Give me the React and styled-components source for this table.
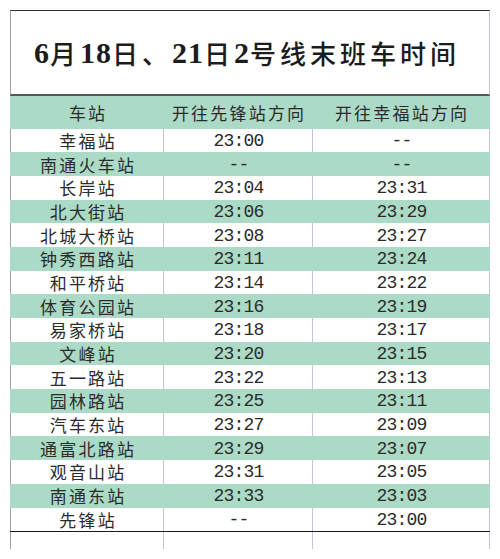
import React from "react";
import styled, { createGlobalStyle } from "styled-components";

const Global = createGlobalStyle`
  html, body { margin: 0; padding: 0; background: #ffffff; }
  body { font-family: "Liberation Serif", "Noto Sans CJK SC", serif; }
`;

const GREEN = "#abdac6";
const DIVIDER = "#cdbfd6";
const LEFTLINE = "#a2a2a2";

const Page = styled.div`
  width: 500px;
  height: 559px;
  box-sizing: border-box;
  padding: 10px 0 0 10px;
`;

const Sheet = styled.div`
  width: 480px;
  display: flex;
  flex-direction: column;
`;

const Title = styled.div`
  height: 83px;
  border-top: 1px solid #2e2e2e;
  border-left: 1px solid ${LEFTLINE};
  border-right: 1px solid ${DIVIDER};
  border-bottom: 2px solid #555a58;
  display: flex;
  align-items: center;
  justify-content: center;
  padding-right: 6px;
  font-family: "Noto Sans CJK SC", sans-serif;
  font-weight: 500;
  font-size: 26px;
  letter-spacing: 4px;
  color: #1c1c1c;
`;

const Num = styled.span`
  font-family: "Liberation Serif", serif;
  font-weight: 700;
  font-size: 30px;
  letter-spacing: 1px;
`;

const Row = styled.div`
  display: grid;
  grid-template-columns: 153px 149px 178px;
  height: ${(p) => p.$h}px;
  background: ${(p) => (p.$green ? GREEN : "#ffffff")};
  border-top: ${(p) => (p.$rule ? "1px solid #1a1a1a" : "none")};
  box-sizing: border-box;
`;

const Cell = styled.div`
  display: flex;
  align-items: center;
  justify-content: center;
  box-sizing: border-box;
  border-left: 1px solid
    ${(p) => (p.$green ? GREEN : p.$first ? LEFTLINE : DIVIDER)};
  border-right: ${(p) =>
    p.$last ? `1px solid ${p.$green ? GREEN : DIVIDER}` : "none"};
  color: #2b2b2b;
  white-space: nowrap;
`;

const Name = styled.span`
  font-family: "Noto Sans CJK SC", sans-serif;
  font-size: 17px;
  letter-spacing: 2.2px;
  margin-right: -2.2px;
  line-height: 1;
`;

const Time = styled.span`
  font-family: "Liberation Mono", monospace;
  font-size: 18px;
  letter-spacing: -0.8px;
  margin-right: -0.8px;
  line-height: 1;
  margin-top: 1px;
`;

const rows = [
  ["幸福站", "23:00", "--"],
  ["南通火车站", "--", "--"],
  ["长岸站", "23:04", "23:31"],
  ["北大街站", "23:06", "23:29"],
  ["北城大桥站", "23:08", "23:27"],
  ["钟秀西路站", "23:11", "23:24"],
  ["和平桥站", "23:14", "23:22"],
  ["体育公园站", "23:16", "23:19"],
  ["易家桥站", "23:18", "23:17"],
  ["文峰站", "23:20", "23:15"],
  ["五一路站", "23:22", "23:13"],
  ["园林路站", "23:25", "23:11"],
  ["汽车东站", "23:27", "23:09"],
  ["通富北路站", "23:29", "23:07"],
  ["观音山站", "23:31", "23:05"],
  ["南通东站", "23:33", "23:03"],
  ["先锋站", "--", "23:00"],
];

export default function App() {
  return (
    <Page>
      <Global />
      <Sheet>
        <Title>
          <Num>6</Num>月<Num>18</Num>日、<Num>21</Num>日<Num>2</Num>号线末班车时间
        </Title>
        <Row $green $h={32.5}>
          <Cell $green $first>
            <Name>车站</Name>
          </Cell>
          <Cell $green>
            <Name>开往先锋站方向</Name>
          </Cell>
          <Cell $green $last>
            <Name>开往幸福站方向</Name>
          </Cell>
        </Row>
        {rows.map((r, i) => {
          const g = i % 2 === 1;
          return (
            <Row key={r[0]} $green={g} $h={23.7}>
              <Cell $green={g} $first>
                <Name>{r[0]}</Name>
              </Cell>
              <Cell $green={g}>
                <Time>{r[1]}</Time>
              </Cell>
              <Cell $green={g} $last>
                <Time>{r[2]}</Time>
              </Cell>
            </Row>
          );
        })}
        <Row $rule $h={18}>
          <Cell $first />
          <Cell />
          <Cell $last />
        </Row>
      </Sheet>
    </Page>
  );
}
